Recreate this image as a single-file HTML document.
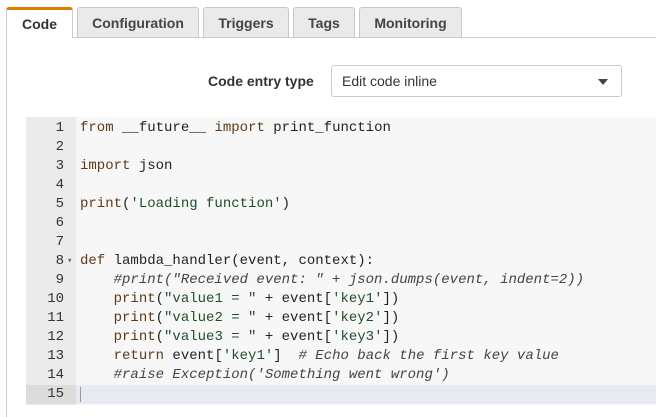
<!DOCTYPE html>
<html><head><style>
body{margin:0;width:656px;height:417px;background:#fff;font-family:"Liberation Sans",sans-serif;position:relative;overflow:hidden}
.tab{position:absolute;top:7px;height:30px;background:#eaeaea;border:1px solid #c8c8c8;border-bottom:none;border-radius:3px 3px 0 0;font-weight:bold;font-size:14px;color:#444;text-align:center;line-height:31px;box-sizing:border-box}
.line{position:absolute;left:72px;right:0;top:37px;border-top:1px solid #ccc}
.lb{position:absolute;left:6px;top:37px;bottom:0;border-left:1px solid #ccc}
.ed{position:absolute;left:26px;top:117px;width:630px;height:288px;background:#f7f7f7}
.gut{position:absolute;left:26px;top:117px;width:50px;height:288px;background:#ebebeb}
.code{position:absolute;left:26px;top:119px;font-family:"Liberation Mono",monospace;font-size:14px;line-height:19px;color:#222}
.r{height:19px;white-space:pre;position:relative}
.n{display:inline-block;width:38px;text-align:right;color:#333}
.t{position:absolute;left:54px;top:0}
.k{color:#5e3a18}.s{color:#1f4f2a}.c{color:#444;font-style:italic}
</style></head><body>
<div class="line"></div><div class="lb"></div>
<div class="tab" style="left:6px;width:67px;background:#fff;border-color:#ccc;border-top:3px solid #e07b00;color:#333;line-height:29px;height:31px">Code</div>
<div class="tab" style="left:77px;width:122px">Configuration</div>
<div class="tab" style="left:203px;width:86px">Triggers</div>
<div class="tab" style="left:293px;width:62px">Tags</div>
<div class="tab" style="left:359px;width:103px">Monitoring</div>
<div style="position:absolute;left:208px;top:73px;font-size:14px;font-weight:bold;color:#333">Code entry type</div>
<div style="position:absolute;left:331px;top:65px;width:291px;height:32px;box-sizing:border-box;border:1px solid #ccc;border-radius:3px;font-size:14px;color:#333;padding:7px 10px">Edit code inline<span style="position:absolute;right:13px;top:13px;border-left:5px solid transparent;border-right:5px solid transparent;border-top:6px solid #444"></span></div>
<div class="ed"></div><div class="gut"></div>
<div style="position:absolute;left:76px;top:385px;width:580px;height:19px;background:#e6ebf1"></div>
<div style="position:absolute;left:26px;top:385px;width:50px;height:19px;background:#dcdcdc"></div>
<div style="position:absolute;left:80px;top:387px;width:1px;height:15px;background:#999"></div>
<div class="code">
<div class="r"><span class="n">1</span><span class="t"><span class="k">from</span> __future__ <span class="k">import</span> print_function</span></div>
<div class="r"><span class="n">2</span></div>
<div class="r"><span class="n">3</span><span class="t"><span class="k">import</span> json</span></div>
<div class="r"><span class="n">4</span></div>
<div class="r"><span class="n">5</span><span class="t"><span class="k">print</span>(<span class="s">'Loading function'</span>)</span></div>
<div class="r"><span class="n">6</span></div>
<div class="r"><span class="n">7</span></div>
<div class="r"><span class="n">8</span><span style="font-size:9px;color:#666;position:absolute;left:41px;top:0">▾</span><span class="t"><span class="k">def</span> lambda_handler(event, context):</span></div>
<div class="r"><span class="n">9</span><span class="t">    <span class="c">#print("Received event: " + json.dumps(event, indent=2))</span></span></div>
<div class="r"><span class="n">10</span><span class="t">    <span class="k">print</span>(<span class="s">"value1 = "</span> + event[<span class="s">'key1'</span>])</span></div>
<div class="r"><span class="n">11</span><span class="t">    <span class="k">print</span>(<span class="s">"value2 = "</span> + event[<span class="s">'key2'</span>])</span></div>
<div class="r"><span class="n">12</span><span class="t">    <span class="k">print</span>(<span class="s">"value3 = "</span> + event[<span class="s">'key3'</span>])</span></div>
<div class="r"><span class="n">13</span><span class="t">    <span class="k">return</span> event[<span class="s">'key1'</span>]  <span class="c"># Echo back the first key value</span></span></div>
<div class="r"><span class="n">14</span><span class="t">    <span class="c">#raise Exception('Something went wrong')</span></span></div>
<div class="r"><span class="n">15</span></div>
</div>
</body></html>
